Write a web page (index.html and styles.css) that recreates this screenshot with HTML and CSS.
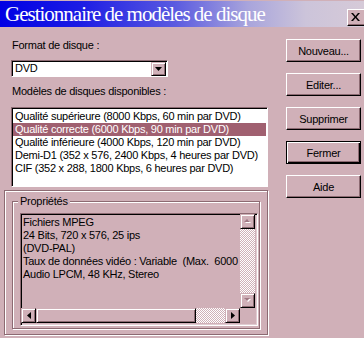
FILE: index.html
```html
<!DOCTYPE html>
<html lang="fr">
<head>
    <meta charset="UTF-8">
    <title>Gestionnaire de modèles de disque</title>
    <link rel="stylesheet" href="styles.css">
</head>
<body>
    <div class="window">
        <div class="titlebar">
            <span class="title">Gestionnaire de modèles de disque</span>
            <button class="close">
                <svg width="9" height="8" viewBox="0 0 9 8"><path d="M0 0h2l2.5 3 2.5-3h2l-3.5 4 3.5 4h-2l-2.5-3-2.5 3h-2l3.5-4z" fill="#000"/></svg>
            </button>
        </div>

        <div class="dialog">
            <div class="main">
                <div class="label">Format de disque :</div>
                <div class="combo">
                    <span class="combo-value">DVD</span>
                    <span class="combo-arrow">
                        <svg width="7" height="4" viewBox="0 0 7 4"><path d="M0 0h7l-3.5 4z" fill="#000"/></svg>
                    </span>
                </div>

                <div class="label">Modèles de disques disponibles :</div>
                <ul class="listbox">
                    <li>Qualité supérieure (8000 Kbps, 60 min par DVD)</li>
                    <li class="selected">Qualité correcte (6000 Kbps, 90 min par DVD)</li>
                    <li>Qualité inférieure (4000 Kbps, 120 min par DVD)</li>
                    <li>Demi-D1 (352 x 576, 2400 Kbps, 4 heures par DVD)</li>
                    <li>CIF (352 x 288, 1800 Kbps, 6 heures par DVD)</li>
                </ul>

                <div class="frame">
                    <fieldset class="group">
                        <legend>Propriétés</legend>
                        <div class="props">
                            <div class="props-text">Fichiers MPEG
24 Bits, 720 x 576, 25 ips
(DVD-PAL)
Taux de données vidéo : Variable  (Max.  6000 Kbps)
Audio LPCM, 48 KHz, Stereo</div>
                            <div class="vscroll">
                                <span class="sb-btn">
                                    <svg width="7" height="5" viewBox="0 0 7 5"><path d="M1 4h6l-3-3z" fill="#fff"/><path d="M0 3h6l-3-3z" fill="#a07884"/></svg>
                                </span>
                                <span class="sb-track"></span>
                                <span class="sb-btn">
                                    <svg width="7" height="5" viewBox="0 0 7 5"><path d="M1 1h6l-3 3z" fill="#fff"/><path d="M0 0h6l-3 3z" fill="#a07884"/></svg>
                                </span>
                            </div>
                            <div class="hscroll">
                                <span class="sb-btn">
                                    <svg width="4" height="7" viewBox="0 0 4 7"><path d="M4 0v7l-4-3.5z" fill="#000"/></svg>
                                </span>
                                <span class="sb-thumb"></span>
                                <span class="sb-track"></span>
                                <span class="sb-btn">
                                    <svg width="4" height="7" viewBox="0 0 4 7"><path d="M0 0v7l4-3.5z" fill="#000"/></svg>
                                </span>
                            </div>
                            <div class="corner"></div>
                        </div>
                    </fieldset>
                </div>
            </div>

            <div class="buttons">
                <button class="btn">Nouveau...</button>
                <button class="btn">Editer...</button>
                <button class="btn">Supprimer</button>
                <button class="btn default">Fermer</button>
                <button class="btn">Aide</button>
            </div>
        </div>
    </div>
</body>
</html>
```

FILE: styles.css
```css
* {
    margin: 0;
    padding: 0;
    box-sizing: border-box;
}

body {
    width: 364px;
    height: 338px;
    overflow: hidden;
    background-color: #d0b0b8;
    font-family: 'Liberation Sans', Arial, sans-serif;
    font-size: 11px;
    letter-spacing: -0.25px;
    color: #000;
}

.window {
    width: 100%;
    height: 100%;
    padding-top: 1px;
}

/* barre de titre */
.titlebar {
    height: 26px;
    display: flex;
    align-items: center;
    overflow: hidden;
    background: linear-gradient(90deg, #0000e4 0%, #1c1ce4 22%, #5a5ae0 48%, #a8a4dc 68%, #ccc4da 84%, #d6cad8 100%);
}

.title {
    padding-left: 5px;
    font-family: 'Liberation Serif', 'Times New Roman', serif;
    font-size: 21px;
    letter-spacing: -1px;
    line-height: 26px;
    color: #fff;
    white-space: nowrap;
}

.close {
    margin-left: auto;
    margin-right: -2px;
    margin-top: 6px;
    width: 19px;
    height: 17px;
    display: flex;
    align-items: center;
    justify-content: center;
    background: #d0b0b8;
    border: 1px solid;
    border-color: #fff #000 #000 #fff;
    box-shadow: inset -1px -1px #8c6a72;
    padding-right: 2px;
}

.dialog {
    display: flex;
}

.main {
    width: 268px;
    padding-left: 4px;
    display: flex;
    flex-direction: column;
}

.label {
    line-height: 13px;
    margin-left: 8px;
    white-space: nowrap;
}

.label:first-child {
    margin-top: 12px;
}

/* liste déroulante */
.combo {
    margin: 8px 0 0 7px;
    width: 157px;
    height: 17px;
    display: flex;
    background: #fff;
    border: 1px solid;
    border-color: #8c6a72 #fff #fff #8c6a72;
    box-shadow: inset 1px 1px #000;
}

.combo-value {
    flex: 1;
    padding: 1px 0 0 3px;
    line-height: 13px;
}

.combo-arrow {
    width: 15px;
    margin: 1px 1px 0 0;
    display: flex;
    align-items: center;
    justify-content: center;
    background: #d0b0b8;
    border: 1px solid;
    border-color: #d0b0b8 #000 #000 #d0b0b8;
    box-shadow: inset 1px 1px #fff, inset -1px -1px #8c6a72;
}

.label + .listbox {
    margin-top: 9px;
}

.combo + .label {
    margin-top: 8px;
}

/* liste des modèles */
.listbox {
    list-style: none;
    margin-left: 7px;
    width: 257px;
    height: 80px;
    padding: 1px 1px;
    background: #fff;
    border: 1px solid;
    border-color: #8c6a72 #fff #fff #8c6a72;
    box-shadow: inset 1px 1px #000;
    overflow: hidden;
}

.listbox li {
    height: 13px;
    line-height: 13px;
    padding-left: 2px;
    white-space: nowrap;
}

.listbox li:first-child {
    margin-top: 1px;
}

.listbox li.selected {
    background: #a06070;
    color: #fff;
}

/* cadre des propriétés */
.frame {
    margin-top: 3px;
    width: 264px;
    height: 145px;
    border: 1px solid #8c6a72;
    box-shadow: 1px 1px #fff, inset 1px 1px #fff;
}

.group {
    margin: 4px 0 0 7px;
    width: 248px;
    height: 134px;
    border: 1px solid #8c6a72;
    box-shadow: 1px 1px #fff, inset 1px 1px #fff;
    padding: 0;
    min-width: 0;
}

.group legend {
    margin-left: 5px;
    padding: 0 2px;
    line-height: 13px;
    background: #d0b0b8;
}

.props {
    margin: 5px 0 0 7px;
    width: 238px;
    height: 113px;
    display: grid;
    grid-template-columns: 219px 15px;
    grid-template-rows: 94px 15px;
    border: 1px solid;
    border-color: #8c6a72 #fff #fff #8c6a72;
    box-shadow: inset 1px 1px #000, inset -1px -1px #e0ccd2;
}

.props-text {
    padding: 2px 0 0 2px;
    line-height: 13px;
    white-space: pre;
    overflow: hidden;
}

.vscroll {
    display: flex;
    flex-direction: column;
}

.hscroll {
    display: flex;
}

.sb-btn,
.sb-thumb {
    flex: none;
    width: 15px;
    height: 15px;
    display: flex;
    align-items: center;
    justify-content: center;
    background: #d0b0b8;
    border: 1px solid;
    border-color: #d0b0b8 #000 #000 #d0b0b8;
    box-shadow: inset 1px 1px #fff, inset -1px -1px #8c6a72;
}

.sb-thumb {
    width: 160px;
}

.sb-track {
    flex: 1;
    background: repeating-conic-gradient(#fff 0 25%, #d0b0b8 0 50%) 0 0 / 2px 2px;
}

.corner {
    background: #d0b0b8;
}

/* boutons */
.buttons {
    margin: 12px 3px 0 auto;
    display: flex;
    flex-direction: column;
    gap: 11px;
}

.btn {
    width: 75px;
    height: 23px;
    font-family: inherit;
    font-size: 11px;
    letter-spacing: -0.25px;
    background: #d0b0b8;
    border: 1px solid;
    border-color: #fff #000 #000 #fff;
    box-shadow: inset -1px -1px #8c6a72;
    color: #000;
}

.btn.default {
    border-color: #000;
    box-shadow: inset 1px 1px #fff, inset -1px -1px #000, inset -2px -2px #8c6a72;
}
```
